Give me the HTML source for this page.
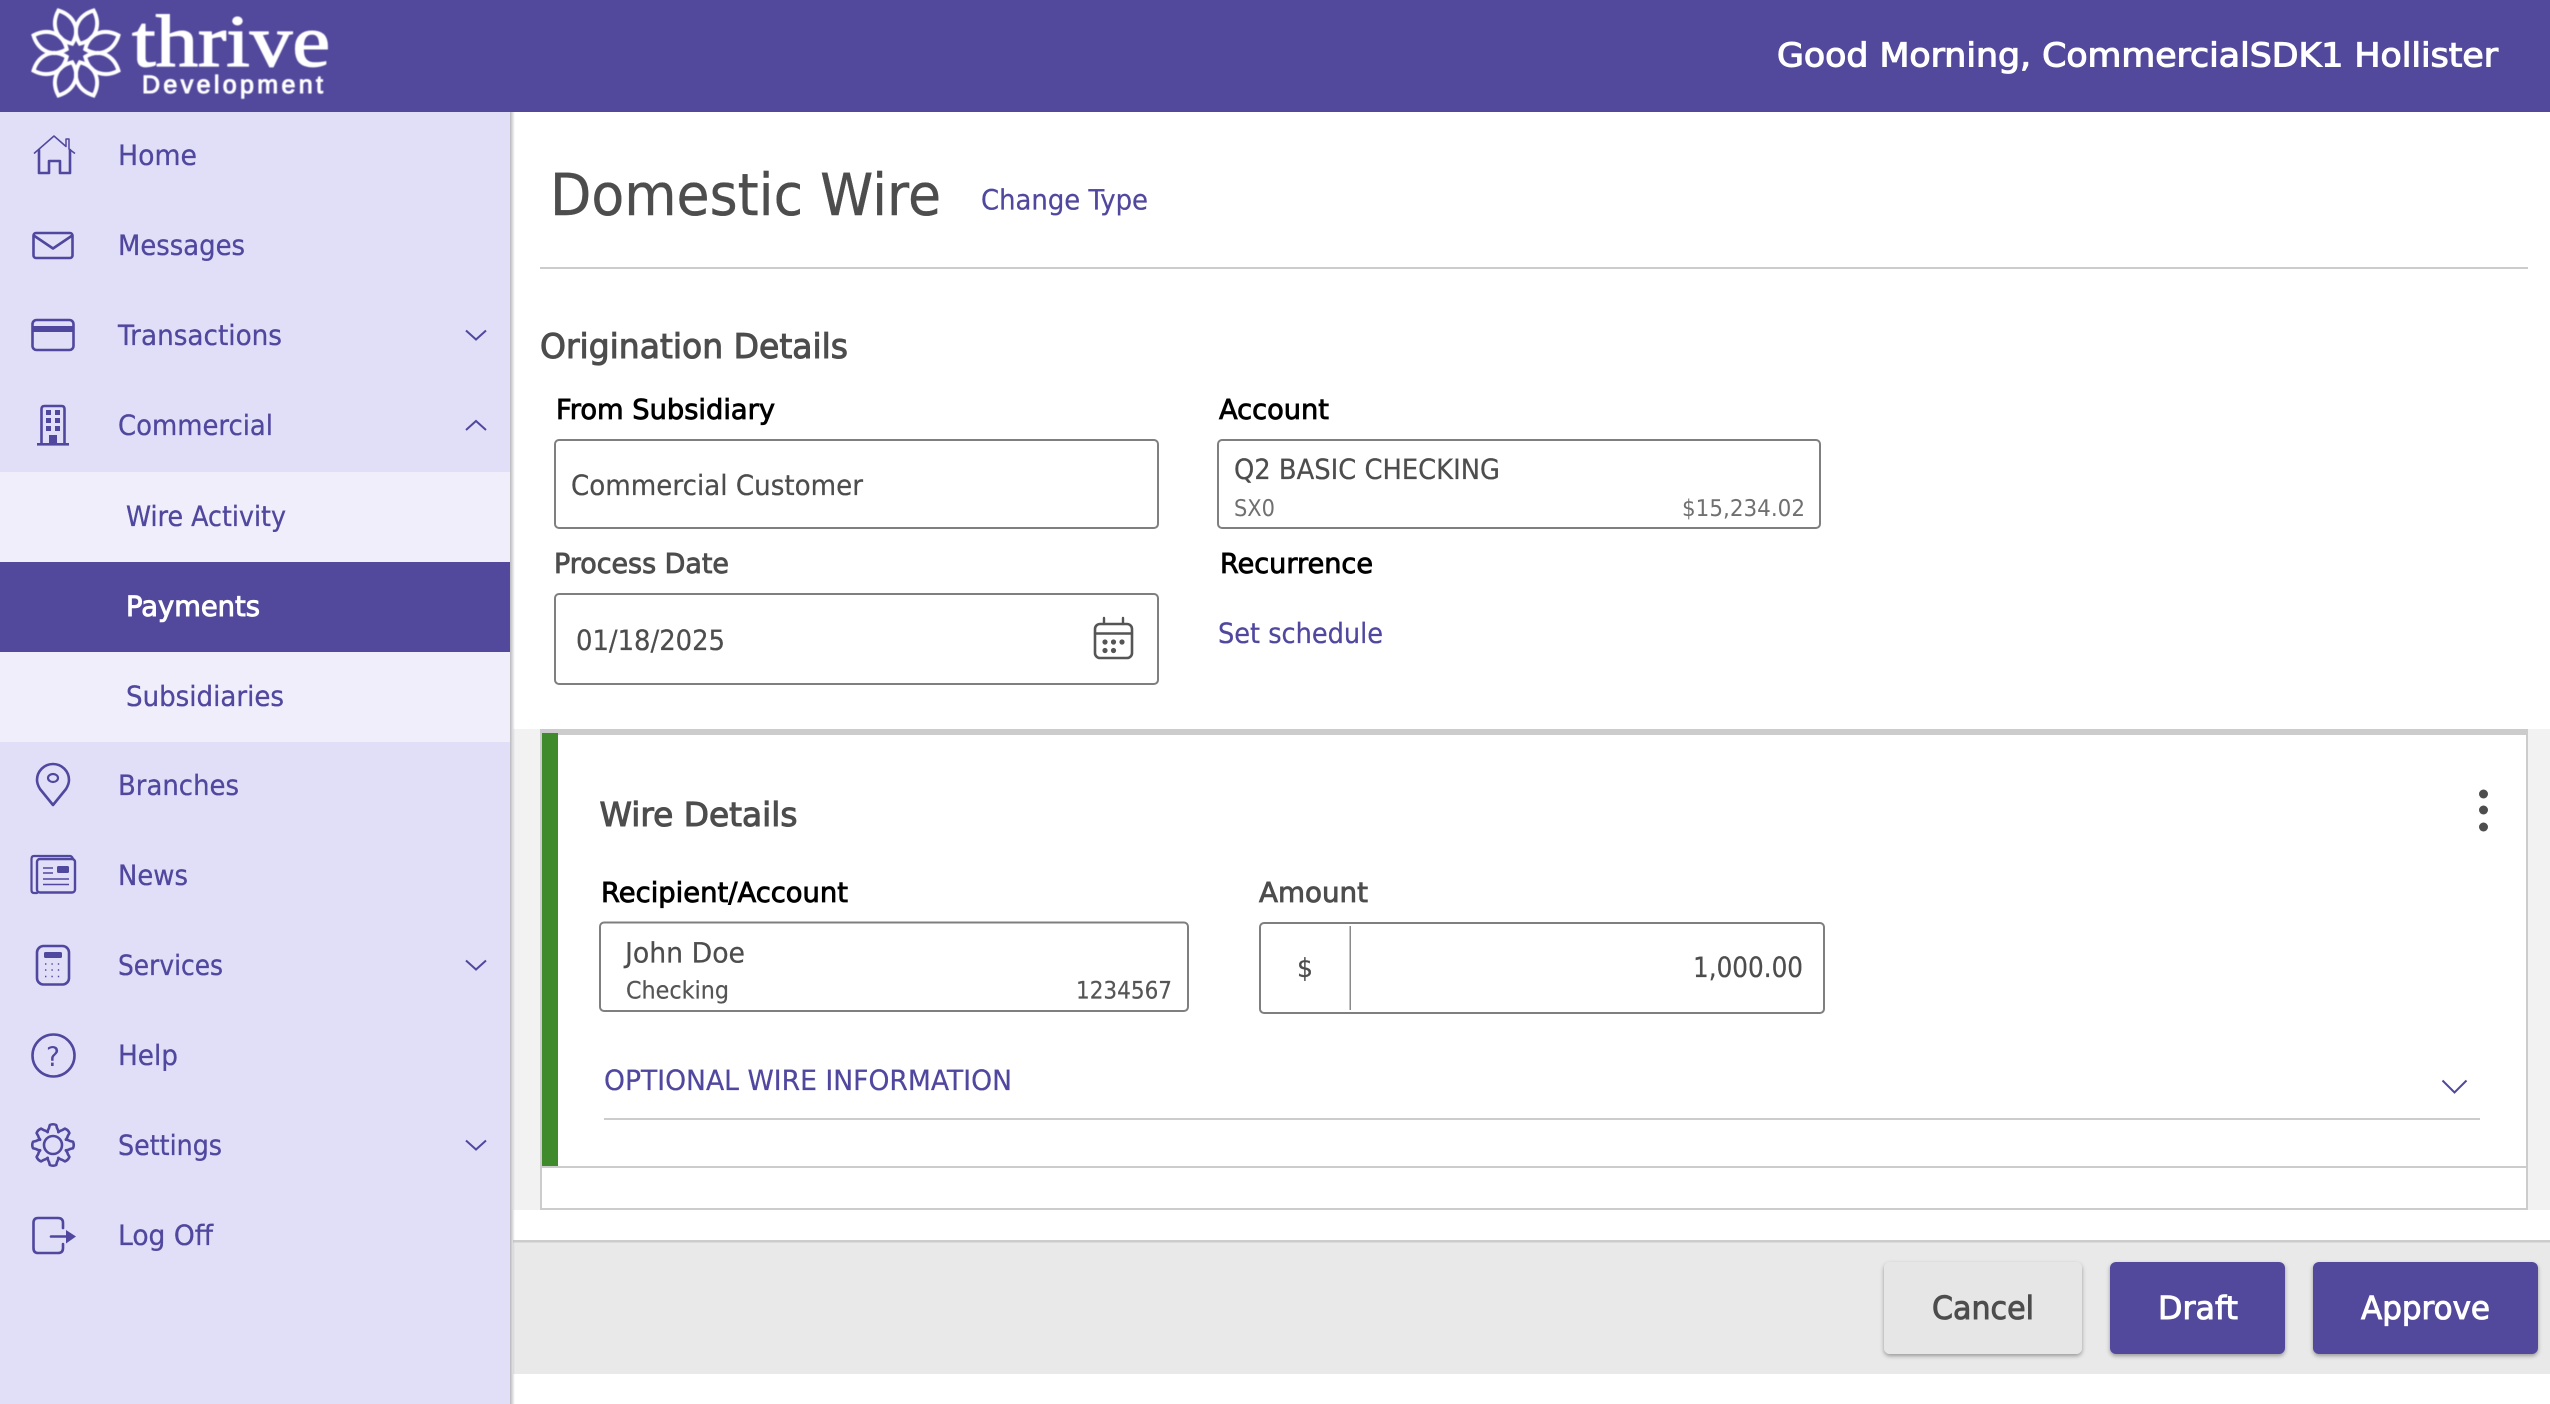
<!DOCTYPE html>
<html lang="en"><head><meta charset="utf-8"><title>Domestic Wire</title>
<style>
html,body{margin:0;padding:0;background:#fff;width:2550px;height:1404px;overflow:hidden}
svg{display:block}
text{font-family:"DejaVu Sans","Liberation Sans",sans-serif;text-rendering:geometricPrecision;white-space:pre}
.n{fill:#50479e;font-size:28px;stroke:#50479e;stroke-width:.3px}
.p{fill:#50479e;font-size:28px;stroke:#50479e;stroke-width:.25px}
.d{fill:#4d4d4d;stroke:#4d4d4d;stroke-width:.25px}
.m{stroke:#555;stroke-width:.2px}
.k{fill:#000;font-size:27.5px;stroke:#000;stroke-width:.85px}
.g{fill:#4d4d4d;font-size:27.5px;stroke:#4d4d4d;stroke-width:.85px}
.w{fill:#fff;stroke:#fff;stroke-width:.95px}
.h{fill:#4d4d4d;stroke:#4d4d4d;stroke-width:1.05px}
.c{fill:#4d4d4d;stroke:#4d4d4d;stroke-width:.95px}
.ic{fill:none;stroke:#50479e;stroke-width:2.6;stroke-linejoin:round;stroke-linecap:round}
.f{fill:#50479e}
</style></head><body>
<svg xmlns="http://www.w3.org/2000/svg" width="2550" height="1404" viewBox="0 0 2550 1404">
<defs>
<linearGradient id="sh" x1="0" x2="1" y1="0" y2="0"><stop offset="0" stop-color="#b9b9be"/><stop offset="1" stop-color="#b9b9be" stop-opacity="0"/></linearGradient>
<filter id="bs" x="-20%" y="-30%" width="140%" height="170%"><feDropShadow dx="0" dy="2" stdDeviation="2.2" flood-color="#000" flood-opacity=".35"/></filter>
<filter id="lb" x="-5%" y="-5%" width="110%" height="110%"><feGaussianBlur stdDeviation=".55"/></filter>
</defs>
<rect width="2550" height="1404" fill="#fff"/>

<!-- header -->
<rect width="2550" height="112" fill="#52489c"/>
<g filter="url(#lb)">
<g transform="translate(76 53)" fill="none" stroke="#fff" stroke-width="3.9">
<path transform="rotate(22.5)" d="M0 -10C-15 -21 -11 -37 0 -46C11 -37 15 -21 0 -10Z"/>
<path transform="rotate(67.5)" d="M0 -10C-15 -21 -11 -37 0 -46C11 -37 15 -21 0 -10Z"/>
<path transform="rotate(112.5)" d="M0 -10C-15 -21 -11 -37 0 -46C11 -37 15 -21 0 -10Z"/>
<path transform="rotate(157.5)" d="M0 -10C-15 -21 -11 -37 0 -46C11 -37 15 -21 0 -10Z"/>
<path transform="rotate(202.5)" d="M0 -10C-15 -21 -11 -37 0 -46C11 -37 15 -21 0 -10Z"/>
<path transform="rotate(247.5)" d="M0 -10C-15 -21 -11 -37 0 -46C11 -37 15 -21 0 -10Z"/>
<path transform="rotate(292.5)" d="M0 -10C-15 -21 -11 -37 0 -46C11 -37 15 -21 0 -10Z"/>
<path transform="rotate(337.5)" d="M0 -10C-15 -21 -11 -37 0 -46C11 -37 15 -21 0 -10Z"/>
</g>
<text x="132" y="66" textLength="198" lengthAdjust="spacingAndGlyphs" font-size="74" fill="#fff" stroke="#fff" stroke-width="1.3" style="font-family:'Liberation Serif',serif">thrive</text>
<text x="142" y="93" textLength="181" lengthAdjust="spacing" font-size="25" fill="#fff" stroke="#fff" stroke-width="1" style="font-family:'Liberation Sans',sans-serif">Development</text>
</g>
<text x="1777" y="66.5" textLength="721" lengthAdjust="spacingAndGlyphs" font-size="33" class="w" style="stroke-width:1.1px">Good Morning, CommercialSDK1 Hollister</text>

<!-- content backgrounds -->
<rect x="513" y="729" width="2037" height="481" fill="#f2f2f2"/>
<rect x="540" y="729" width="1988" height="481" fill="#ccc"/>
<rect x="542" y="735" width="1984" height="473" fill="#fff"/>
<rect x="542" y="733" width="16" height="434" fill="#3f8a2a"/>
<rect x="542" y="1166" width="1984" height="2" fill="#ccc"/>
<rect x="540" y="267" width="1988" height="2" fill="#ccc"/>

<!-- footer -->
<rect x="513" y="1240" width="2037" height="134" fill="#e9e9e9"/>
<rect x="513" y="1240" width="2037" height="2.5" fill="#ccc"/>
<rect x="1884" y="1262" width="198" height="92" rx="6" fill="#e6e6e6" filter="url(#bs)"/>
<rect x="2110" y="1262" width="175" height="92" rx="6" fill="#52489c" filter="url(#bs)"/>
<rect x="2313" y="1262" width="225" height="92" rx="6" fill="#52489c" filter="url(#bs)"/>
<text x="1932" y="1319" textLength="102" lengthAdjust="spacingAndGlyphs" font-size="32" class="c">Cancel</text>
<text x="2158" y="1319" textLength="80" lengthAdjust="spacingAndGlyphs" font-size="32" class="w">Draft</text>
<text x="2361" y="1319" textLength="129" lengthAdjust="spacingAndGlyphs" font-size="32" class="w">Approve</text>

<!-- sidebar -->
<rect x="0" y="112" width="510" height="1292" fill="#e1dff7"/>
<rect x="510" y="112" width="5" height="1292" fill="url(#sh)"/>
<rect x="0" y="472" width="510" height="270" fill="#efeefa"/>
<rect x="0" y="562" width="510" height="90" fill="#52489c"/>

<text x="118" y="165" textLength="79" lengthAdjust="spacingAndGlyphs" class="n">Home</text>
<text x="118" y="255" textLength="127" lengthAdjust="spacingAndGlyphs" class="n">Messages</text>
<text x="118" y="345" textLength="164" lengthAdjust="spacingAndGlyphs" class="n">Transactions</text>
<text x="118" y="435" textLength="155" lengthAdjust="spacingAndGlyphs" class="n">Commercial</text>
<text x="126" y="526" textLength="160" lengthAdjust="spacingAndGlyphs" class="n">Wire Activity</text>
<text x="126" y="616" textLength="134" lengthAdjust="spacingAndGlyphs" font-size="28" class="w">Payments</text>
<text x="126" y="706" textLength="158" lengthAdjust="spacingAndGlyphs" class="n">Subsidiaries</text>
<text x="118" y="795" textLength="121" lengthAdjust="spacingAndGlyphs" class="n">Branches</text>
<text x="118" y="885" textLength="70" lengthAdjust="spacingAndGlyphs" class="n">News</text>
<text x="118" y="975" textLength="105" lengthAdjust="spacingAndGlyphs" class="n">Services</text>
<text x="118" y="1065" textLength="60" lengthAdjust="spacingAndGlyphs" class="n">Help</text>
<text x="118" y="1155" textLength="104" lengthAdjust="spacingAndGlyphs" class="n">Settings</text>
<text x="118" y="1245" textLength="95" lengthAdjust="spacingAndGlyphs" class="n">Log Off</text>

<!-- icons -->
<path d="M34 153.5L54 136L66 146.5V139H69V149L75 153.5" fill="none" stroke="#50479e" stroke-width="1.5" stroke-linejoin="round"/>
<path d="M39 150V173H49V161H60V173H70V150" class="ic"/>
<rect x="33.5" y="233" width="39" height="25" rx="2.5" class="ic"/>
<path d="M34.5 236L53 248.5L71.5 236" class="ic"/>
<rect x="32.5" y="320" width="41" height="30" rx="4" class="ic"/>
<rect x="33" y="326" width="40" height="6" class="f"/>
<path d="M41.5 444V409Q41.5 406 44.5 406H61.5Q64.5 406 64.5 409V444" class="ic"/>
<rect x="37" y="443" width="32" height="2.6" class="f"/>
<rect x="46" y="410" width="5" height="5" class="f"/><rect x="55" y="410" width="5" height="5" class="f"/>
<rect x="46" y="418" width="5" height="5" class="f"/><rect x="55" y="418" width="5" height="5" class="f"/>
<rect x="46" y="426" width="5" height="5" class="f"/><rect x="55" y="426" width="5" height="5" class="f"/>
<rect x="49" y="435" width="8" height="9" class="f"/>
<path d="M53 805L40 789Q37 784 37 780A16 16 0 0 1 69 780Q69 784 66 789Z" class="ic"/>
<ellipse cx="53" cy="778" rx="5" ry="4" class="ic" style="stroke-width:2.2"/>
<path d="M37 893H34Q31.5 893 31.5 890V859Q31.5 856 34 856H70Q72 856 73 859" class="ic" style="stroke-width:2.2"/>
<rect x="37" y="859" width="38" height="33.5" rx="3" class="ic" style="stroke-width:2.4"/>
<rect x="57" y="866" width="12" height="7" rx="1.5" class="f"/>
<path d="M43 868H53M43 873H53M43 879H69M43 884.5H69" fill="none" stroke="#50479e" stroke-width="1.5"/>
<rect x="37" y="946" width="32" height="38.5" rx="6.5" class="ic"/>
<rect x="44" y="952" width="18" height="6" rx="1.5" class="f"/>
<path d="M45 964H62M45 970H62M45 976.5H62" fill="none" stroke="#50479e" stroke-width="1.4" stroke-dasharray="1.4 5"/>
<ellipse cx="53.5" cy="1055.5" rx="21" ry="21" class="ic"/>
<text x="46" y="1066" font-size="27" fill="#50479e" textLength="14" lengthAdjust="spacingAndGlyphs">?</text>
<g transform="translate(53 1145)" class="ic">
<circle r="9"/>
<path d="M12.9 -5.4Q15.5 -5 17 -4L20 -3.2Q21.5 0 20 3.2L17 4Q15.5 5 12.9 5.4"/>
<path transform="rotate(45)" d="M12.9 -5.4Q15.5 -5 17 -4L20 -3.2Q21.5 0 20 3.2L17 4Q15.5 5 12.9 5.4"/>
<path transform="rotate(90)" d="M12.9 -5.4Q15.5 -5 17 -4L20 -3.2Q21.5 0 20 3.2L17 4Q15.5 5 12.9 5.4"/>
<path transform="rotate(135)" d="M12.9 -5.4Q15.5 -5 17 -4L20 -3.2Q21.5 0 20 3.2L17 4Q15.5 5 12.9 5.4"/>
<path transform="rotate(180)" d="M12.9 -5.4Q15.5 -5 17 -4L20 -3.2Q21.5 0 20 3.2L17 4Q15.5 5 12.9 5.4"/>
<path transform="rotate(225)" d="M12.9 -5.4Q15.5 -5 17 -4L20 -3.2Q21.5 0 20 3.2L17 4Q15.5 5 12.9 5.4"/>
<path transform="rotate(270)" d="M12.9 -5.4Q15.5 -5 17 -4L20 -3.2Q21.5 0 20 3.2L17 4Q15.5 5 12.9 5.4"/>
<path transform="rotate(315)" d="M12.9 -5.4Q15.5 -5 17 -4L20 -3.2Q21.5 0 20 3.2L17 4Q15.5 5 12.9 5.4"/>
</g>
<path d="M63 1228V1223Q63 1218 58 1218H38Q33.5 1218 33.5 1223V1248Q33.5 1253 38 1253H58Q63 1253 63 1248V1244" class="ic"/>
<path d="M51 1236.5H66" class="ic" style="stroke-width:2.6"/>
<path d="M66 1230L76 1236.5L66 1243.5Z" class="f"/>

<!-- nav chevrons -->
<path d="M466 330.5L476 339.5L486 330.5" fill="none" stroke="#50479e" stroke-width="2"/>
<path d="M466 430L476 421L486 430" fill="none" stroke="#50479e" stroke-width="2"/>
<path d="M466 960.5L476 969.5L486 960.5" fill="none" stroke="#50479e" stroke-width="2"/>
<path d="M466 1140.5L476 1149.5L486 1140.5" fill="none" stroke="#50479e" stroke-width="2"/>

<!-- title -->
<text x="550" y="215" textLength="391" lengthAdjust="spacingAndGlyphs" font-size="58" class="d" style="stroke-width:.4px">Domestic Wire</text>
<text x="981" y="209.5" textLength="167" lengthAdjust="spacingAndGlyphs" class="p">Change Type</text>

<text x="540" y="358" textLength="308" lengthAdjust="spacingAndGlyphs" font-size="34" class="h">Origination Details</text>
<text x="556" y="419" textLength="219" lengthAdjust="spacingAndGlyphs" class="k">From Subsidiary</text>
<text x="1219" y="419" textLength="110" lengthAdjust="spacingAndGlyphs" class="k">Account</text>
<text x="554" y="573" textLength="175" lengthAdjust="spacingAndGlyphs" class="g">Process Date</text>
<text x="1220" y="573" textLength="153" lengthAdjust="spacingAndGlyphs" class="k">Recurrence</text>

<rect x="555" y="440" width="603" height="88" rx="4" fill="#fff" stroke="#7f7f7f" stroke-width="2"/>
<text x="571" y="495" textLength="292" lengthAdjust="spacingAndGlyphs" font-size="28" class="d">Commercial Customer</text>
<rect x="1218" y="440" width="602" height="88" rx="4" fill="#fff" stroke="#7f7f7f" stroke-width="2"/>
<text x="1234" y="479" textLength="266" lengthAdjust="spacingAndGlyphs" font-size="28" class="d">Q2 BASIC CHECKING</text>
<text x="1234" y="516" textLength="41" lengthAdjust="spacingAndGlyphs" font-size="23" fill="#707070">SX0</text>
<text x="1682" y="516" textLength="123" lengthAdjust="spacingAndGlyphs" font-size="23" fill="#707070">$15,234.02</text>
<rect x="555" y="594" width="603" height="90" rx="4" fill="#fff" stroke="#7f7f7f" stroke-width="2"/>
<text x="576" y="650" textLength="149" lengthAdjust="spacingAndGlyphs" font-size="28" class="d">01/18/2025</text>
<text x="1218" y="643" textLength="165" lengthAdjust="spacingAndGlyphs" class="p">Set schedule</text>

<!-- calendar -->
<rect x="1095" y="624" width="37" height="34" rx="5" fill="none" stroke="#555" stroke-width="2.6"/>
<path d="M1095 633.5H1132M1104 618V624M1123 618V624" fill="none" stroke="#555" stroke-width="2.4" stroke-linecap="round"/>
<g fill="#555"><circle cx="1105" cy="642" r="2.6"/><circle cx="1113.5" cy="642" r="2.6"/><circle cx="1122" cy="642" r="2.6"/><circle cx="1105" cy="650.5" r="2.6"/><circle cx="1113.5" cy="650.5" r="2.6"/></g>

<!-- wire details -->
<text x="599.5" y="826" textLength="198" lengthAdjust="spacingAndGlyphs" font-size="33" class="h">Wire Details</text>
<circle cx="2483.5" cy="794" r="4.5" fill="#4d4d4d"/><circle cx="2483.5" cy="810" r="4.5" fill="#4d4d4d"/><circle cx="2483.5" cy="827" r="4.5" fill="#4d4d4d"/>
<text x="601" y="902" textLength="247" lengthAdjust="spacingAndGlyphs" class="k">Recipient/Account</text>
<text x="1259" y="902" textLength="109" lengthAdjust="spacingAndGlyphs" class="g">Amount</text>
<rect x="600" y="922.5" width="588" height="88.5" rx="4" fill="#fff" stroke="#7f7f7f" stroke-width="2"/>
<text x="625" y="962.5" textLength="120" lengthAdjust="spacingAndGlyphs" font-size="28" class="d">John Doe</text>
<text x="626" y="998.5" textLength="103" lengthAdjust="spacingAndGlyphs" font-size="24" fill="#555" class="m">Checking</text>
<text x="1076" y="998.5" textLength="96" lengthAdjust="spacingAndGlyphs" font-size="24" fill="#555" class="m">1234567</text>
<rect x="1260" y="923" width="564" height="90" rx="4" fill="#fff" stroke="#7f7f7f" stroke-width="2"/>
<rect x="1349.5" y="926" width="1.5" height="84" fill="#8a8a8a"/>
<text x="1297" y="977" textLength="16" lengthAdjust="spacingAndGlyphs" font-size="26" class="d">$</text>
<text x="1693" y="977" textLength="110" lengthAdjust="spacingAndGlyphs" font-size="28" class="d">1,000.00</text>
<text x="604" y="1090" textLength="408" lengthAdjust="spacingAndGlyphs" class="p">OPTIONAL WIRE INFORMATION</text>
<rect x="604" y="1118" width="1876" height="2" fill="#ccc"/>
<path d="M2442.5 1080.5L2454.5 1092.5L2466.5 1080.5" fill="none" stroke="#50479e" stroke-width="2"/>
</svg>
</body></html>
